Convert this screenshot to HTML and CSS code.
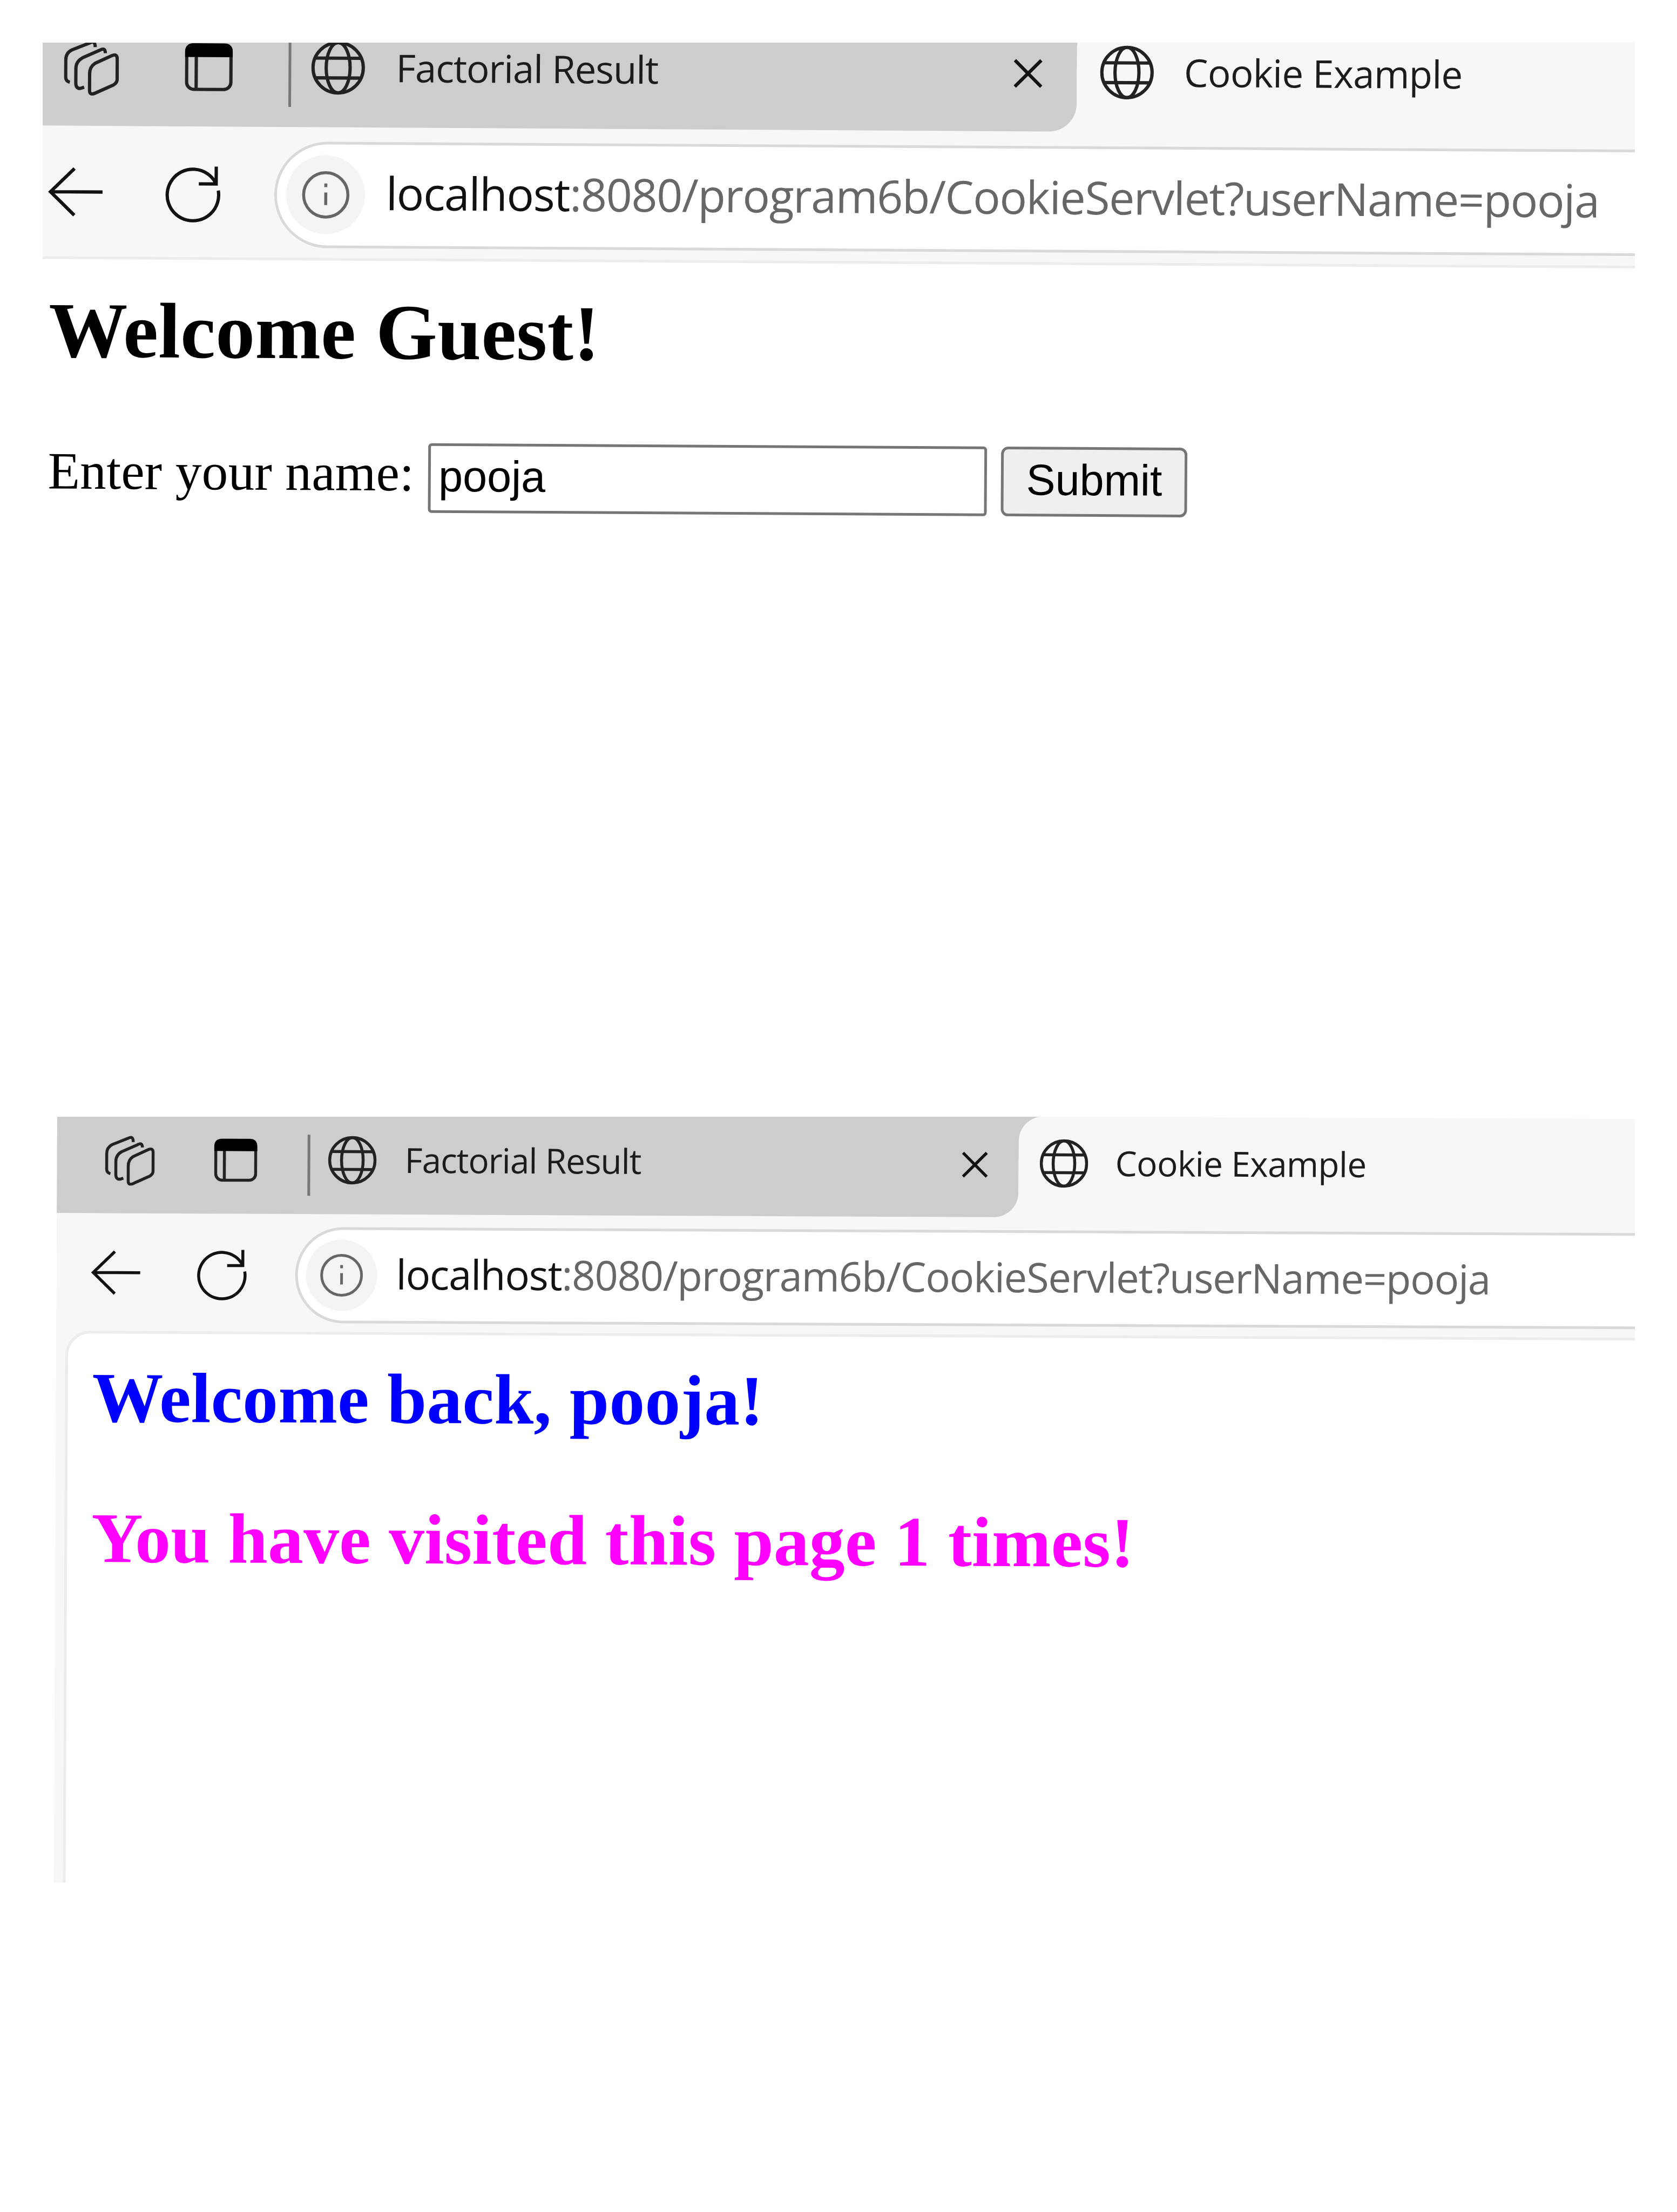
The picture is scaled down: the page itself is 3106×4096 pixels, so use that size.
FILE: index.html
```html
<!DOCTYPE html>
<html lang="en">
<head>
<meta charset="utf-8">
<title>Cookie Example</title>
<link rel="stylesheet" href="styles.css">
</head>
<body>
<svg class="defs" aria-hidden="true">
  <symbol id="stack" viewBox="0 0 92 93"><path d="M43 84V56Q43 45 52 39L80 26Q89 22 89 32V66Q89 71 83 75L52 89Q43 93 43 84zM69 22Q69 12 60 17L31 30Q20 36 20 48V72Q20 82 28 81L34 79M52 12Q52 0 43 5L13 17Q3 22 3 34V62Q3 69 10 71"/></symbol>
  <symbol id="panel" viewBox="0 0 80 80"><rect x="3" y="3" width="74" height="74" rx="12"/><path d="M19 20V76"/><path class="solid" d="M0 23V15Q0 0 15 0H65Q80 0 80 15V23z"/></symbol>
  <symbol id="globe" viewBox="0 0 90 90"><circle cx="45" cy="45" r="42"/><ellipse cx="45" cy="45" rx="20" ry="42"/><path d="M7 29H83M7 62H83"/></symbol>
  <symbol id="close" viewBox="0 0 50 50"><path d="M3 3L47 47M47 3L3 47"/></symbol>
  <symbol id="back" viewBox="0 0 92 84"><path d="M44 3L4 42L44 81M4 42H91"/></symbol>
  <symbol id="reload" viewBox="0 0 96 96"><path d="M88.6 42A43 43 0 1 1 84 29M85 2V31H56"/></symbol>
  <symbol id="info" viewBox="0 0 80 80"><circle cx="40" cy="40" r="37"/><path d="M40 36V57M40 21V27"/></symbol>
</svg>

<section class="shot shot-first">
  <div class="window">
    <header class="tabs">
      <div class="tab-strip">
        <svg class="icon i-stack"><use href="#stack"/></svg>
        <svg class="icon i-panel"><use href="#panel"/></svg>
        <span class="divider"></span>
        <svg class="icon i-globe"><use href="#globe"/></svg>
        <span class="tab-title title-factorial">Factorial Result</span>
        <svg class="icon i-close"><use href="#close"/></svg>
      </div>
      <div class="tab-active">
        <svg class="icon i-globe"><use href="#globe"/></svg>
        <span class="tab-title title-cookie">Cookie Example</span>
      </div>
    </header>
    <nav class="toolbar">
      <svg class="icon i-back"><use href="#back"/></svg>
      <svg class="icon i-reload"><use href="#reload"/></svg>
      <div class="address">
        <span class="site-info"><svg class="icon i-info"><use href="#info"/></svg></span>
        <span class="url"><b class="host">localhost</b>:8080/program6b/CookieServlet?userName=pooja</span>
      </div>
    </nav>
    <main class="page">
      <h2 class="heading">Welcome Guest!</h2>
      <form class="form">
        <label class="label" for="name">Enter your name:</label>
        <input class="field" id="name" type="text" value="pooja">
        <button class="submit" type="button">Submit</button>
      </form>
    </main>
  </div>
</section>

<section class="shot shot-second">
  <div class="window">
    <header class="tabs">
      <div class="tab-strip">
        <svg class="icon i-stack"><use href="#stack"/></svg>
        <svg class="icon i-panel"><use href="#panel"/></svg>
        <span class="divider"></span>
        <svg class="icon i-globe"><use href="#globe"/></svg>
        <span class="tab-title title-factorial">Factorial Result</span>
        <svg class="icon i-close"><use href="#close"/></svg>
      </div>
      <div class="tab-active">
        <svg class="icon i-globe"><use href="#globe"/></svg>
        <span class="tab-title title-cookie">Cookie Example</span>
      </div>
    </header>
    <nav class="toolbar">
      <svg class="icon i-back"><use href="#back"/></svg>
      <svg class="icon i-reload"><use href="#reload"/></svg>
      <div class="address">
        <span class="site-info"><svg class="icon i-info"><use href="#info"/></svg></span>
        <span class="url"><b class="host">localhost</b>:8080/program6b/CookieServlet?userName=pooja</span>
      </div>
    </nav>
    <main class="page">
      <h2 class="heading welcome">Welcome back, pooja!</h2>
      <h2 class="heading visits">You have visited this page 1 times!</h2>
    </main>
  </div>
</section>
</body>
</html>
```
FILE: styles.css
```css
* { box-sizing: border-box; }

body {
  margin: 0;
  width: 3106px;
  height: 4096px;
  overflow: hidden;
  background: #fff;
  display: flex;
  flex-direction: column;
}

.defs { display: none; }

/* Cropped, slightly tilted browser windows */
.shot { overflow: hidden; flex: none; }
.shot-first { margin: 79px 78px 0 79px; height: 1881px; }
.shot-second { margin: 108px 78px 0 98px; height: 1418px; }

.window {
  width: 3100px;
  height: 1900px;
  display: flex;
  flex-direction: column;
  background: #f7f7f7;
  transform-origin: 0 0;
}
.shot-first .window { zoom: 1.109; margin: -49px 0 0 -53px; transform: rotate(0.344deg); }
.shot-second .window { margin: -9px 0 0 8px; transform: rotate(0.26deg); }

.icon {
  flex: none;
  display: block;
  fill: none;
  stroke: #222;
  stroke-width: 5.5;
  overflow: visible;
}
.solid { fill: #000; stroke: none; }

/* Tabs */
.tabs {
  height: 187px;
  flex: none;
  display: flex;
  background: linear-gradient(#cecccd, #cecccd) 1700px 0 / 150px 80px no-repeat;
}
.tab-strip {
  width: 1781px;
  flex: none;
  display: flex;
  align-items: flex-start;
  padding-left: 89px;
  background: #cecccd;
  border-bottom-right-radius: 46px;
}
.tab-active {
  flex: 1;
  display: flex;
  align-items: flex-start;
  padding-left: 39px;
  background: #f7f7f7;
  border-top-left-radius: 46px;
}
.i-stack { width: 92px; height: 93px; margin-top: 43px; }
.i-panel { width: 80px; height: 80px; margin: 48px 0 0 110px; }
.divider { width: 5px; height: 113px; margin: 40px 0 0 93px; background: #777; flex: none; }
.i-globe { width: 90px; height: 90px; margin: 42px 0 0 33px; }
.tab-active .i-globe { margin-left: 0; }
.tab-title {
  font: 400 64px/68px "Open Sans", "Noto Sans", sans-serif;
  color: #1c1c1c;
  margin: 52px 0 0 52px;
  white-space: nowrap;
}
.title-factorial { width: 1031px; letter-spacing: -1.1px; }
.title-cookie { margin-left: 50px; letter-spacing: -0.7px; }
.i-close { width: 50px; height: 50px; margin-top: 65px; stroke: #111; }

/* Toolbar */
.toolbar { height: 218px; flex: none; display: flex; align-items: flex-start; padding-left: 64px; }
.i-back { width: 92px; height: 84px; margin-top: 68px; stroke: #111; }
.i-reload { width: 96px; height: 96px; margin: 65px 0 0 104px; stroke: #111; }
.address {
  flex: 1;
  height: 178px;
  margin: 24px -200px 0 86px;
  padding-left: 15px;
  display: flex;
  align-items: flex-start;
  background: #fff;
  border: 5px solid #d9d9d9;
  border-radius: 89px;
}
.site-info {
  width: 132px;
  height: 132px;
  margin-top: 18px;
  flex: none;
  display: flex;
  align-items: center;
  justify-content: center;
  background: #f5f3f4;
  border-radius: 50%;
}
.i-info { width: 80px; height: 80px; stroke: #666; stroke-width: 5; }
.url {
  font: 400 76px/100px "Open Sans", "Noto Sans", sans-serif;
  letter-spacing: -1.28px;
  color: #676767;
  margin: 31px 0 0 35px;
  white-space: nowrap;
}
.host { font-weight: 400; color: #111; }

/* Page */
.page {
  flex: 1;
  margin-left: 17px;
  padding: 44px 0 0 45px;
  background: #fff;
  border: 5px solid #ececec;
  border-radius: 46px 0 0 0;
  display: flex;
  flex-direction: column;
  gap: 110px;
}
.heading {
  margin: 0;
  font: 700 131.6px/150px "Liberation Serif", "Times New Roman", serif;
  letter-spacing: 0.25px;
  white-space: nowrap;
  color: #000;
}
.welcome { color: #00f; }
.visits { color: #f0f; }

.form { display: flex; align-items: flex-start; }
.label {
  width: 635px;
  margin-top: -8px;
  font: 87.7px/116px "Liberation Serif", "Times New Roman", serif;
  letter-spacing: 0.2px;
  white-space: nowrap;
}
.field, .submit {
  height: 116px;
  font: 73px "Liberation Sans", Arial, sans-serif;
  color: #000;
  border: 5px solid #767676;
}
.field { width: 933px; padding: 0 0 5px 13px; border-radius: 6px; background: #fff; }
.submit { width: 311px; margin-left: 24px; padding: 0 0 6px; border-radius: 12px; background: #efefef; }
```
